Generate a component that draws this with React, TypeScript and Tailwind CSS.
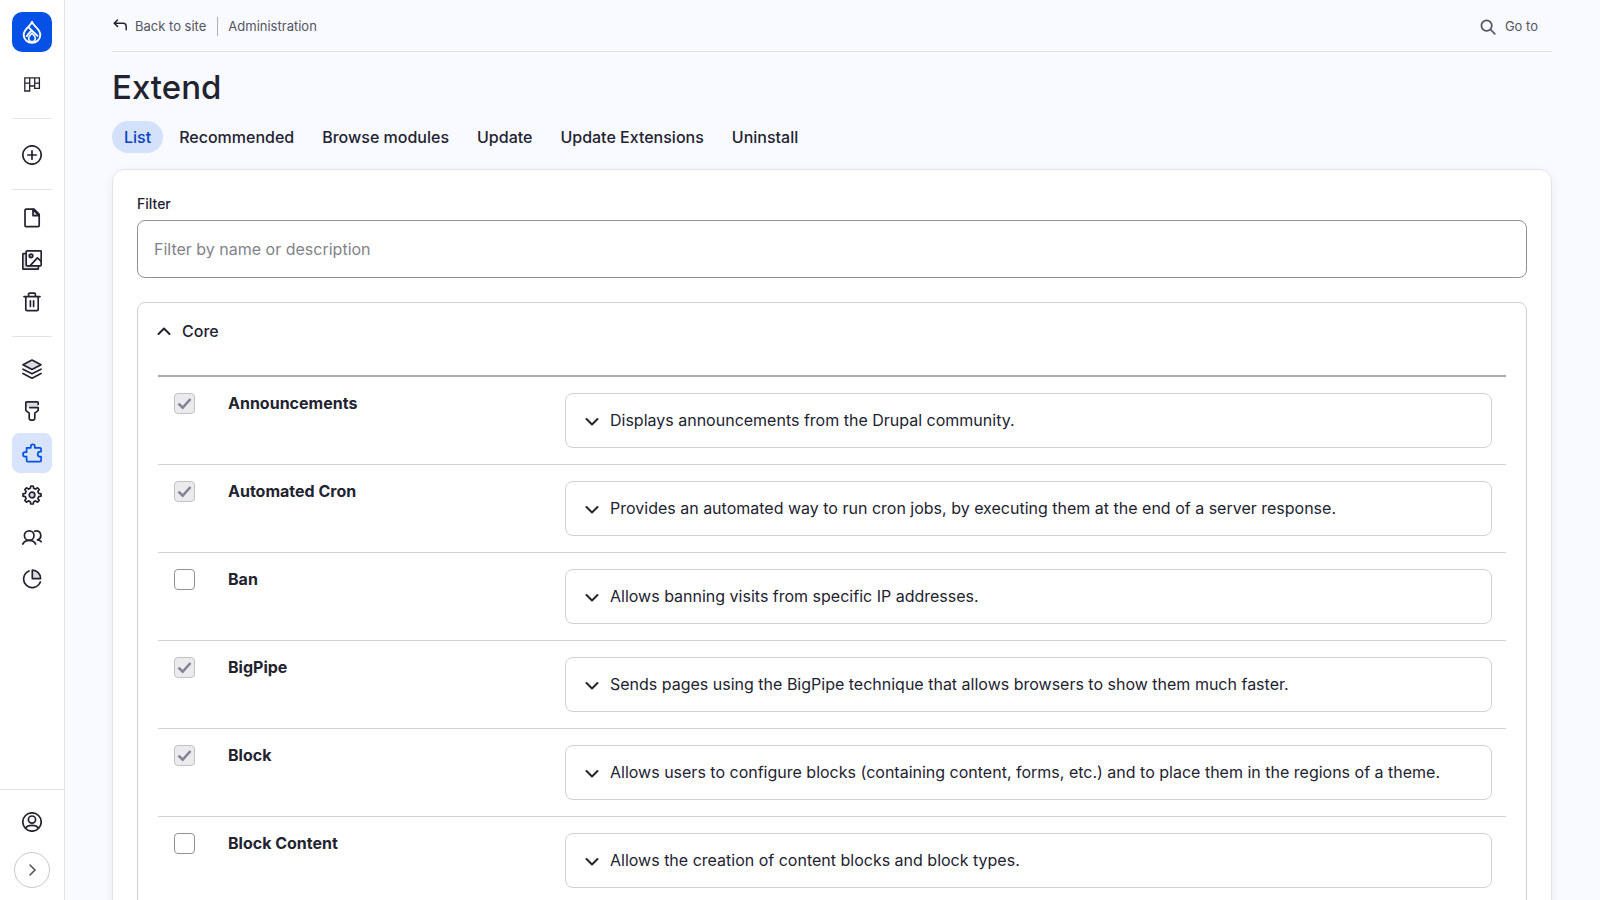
import React from 'react';

type IconProps = { children: React.ReactNode };

const Icon = ({ children }: IconProps) => (
  <svg
    className="size-5"
    viewBox="0 0 20 20"
    fill="none"
    stroke="currentColor"
    strokeWidth="1.7"
    strokeLinecap="round"
    strokeLinejoin="round"
    aria-hidden="true"
  >
    {children}
  </svg>
);

const BlocksIcon = () => (
  <svg className="size-5" viewBox="0 0 20 20" fill="none" stroke="currentColor" strokeWidth="1.3" aria-hidden="true">
    <path d="M2.8 3.8h14.6v10.6h-4.7V12H7.700v5H2.8zM7.7 3.8V12M12.7 3.8V12M2.8 9.2h4.9M12.7 9.2h4.700" />
  </svg>
);

const PlusIcon = () => (
  <Icon>
    <circle cx="10" cy="10" r="9.2" />
    <path d="M10 5.8v8.4M5.8 10h8.4" />
  </Icon>
);

const FileIcon = () => (
  <Icon>
    <path d="M4 1.2h8l5.2 5.2v11.2a1 1 0 0 1-1 1H4a1 1 0 0 1-1-1V2.2a1 1 0 0 1 1-1z" />
    <path d="M11 1.4v6.200h6z" fill="#dcdde1" />
  </Icon>
);

const MediaIcon = () => (
  <Icon>
    <path d="M4 3.6H1.6a.8.8 0 0 0-.8.8v14c0 .4.4.8.8.8h14c.4 0 .8-.4.8-.8V16" fill="#dcdde1" />
    <rect x="4.2" y=".9" width="15" height="15" rx=".8" fill="white" />
    <circle cx="9" cy="5.8" r="1.8" fill="#9d9ea6" />
    <path d="m8.2 15.6 7.2-7.8 3.8 3.6" />
  </Icon>
);

const TrashIcon = () => (
  <Icon>
    <path d="M2 4.6h16M3.8 4.8v12.6c0 .7.5 1.2 1.2 1.2h10c.7 0 1.2-.5 1.2-1.2V4.8M6.6 4.4V2.2c0-.6.4-1 1-1h4.8c.6 0 1 .4 1 1v2.2M8.4 8.8v5.6M11.6 8.8v5.6" />
  </Icon>
);

const LayersIcon = () => (
  <Icon>
    <path d="M10 1 1 5.8l9 4.8 9-4.8z" fill="#dcdde1" />
    <path d="m1 10.2 9 4.6 9-4.6M1 14.4l9 4.8 9-4.8" />
  </Icon>
);

const BrushIcon = () => (
  <Icon>
    <path d="M4 1h12v5.4H4z" fill="#dcdde1" stroke="none" />
    <path d="M16.2 3.4V1.700a.8.8 0 0 0-.8-.8H4.600a.8.8 0 0 0-.8.8v7.200c0 .400.200.800.500 1l2.900 2.200v5.200c0 1 .8 1.900 1.900 1.900h1.800c1 0 1.900-.9 1.900-1.900v-5.200l2.900-2.200c.3-.2.500-.6.500-1V6.600H7.800" />
  </Icon>
);

const PuzzleIcon = () => (
  <Icon>
    <path d="M4.6 4.8h4.2V3.4a2 2 0 0 1 4 0v1.4h5.1c.7 0 1.2.5 1.2 1.2v2.7h-.9a2.5 2.5 0 0 0 0 5h.9v3.8c0 .7-.5 1.2-1.2 1.2H5.8c-.7 0-1.2-.5-1.2-1.2v-3.9H3.2a2.2 2.2 0 0 1 0-4.4h1.4z" />
  </Icon>
);

const GearIcon = () => (
  <Icon>
    <path d="M8.3 3.3 8.8 1h2.4l.5 2.3 1.8.8 2-1.3 1.7 1.7-1.3 2 .8 1.8 2.3.5v2.4l-2.3.5-.8 1.8 1.3 2-1.7 1.7-2-1.3-1.8.8-.5 2.3H8.8l-.5-2.3-1.8-.8-2 1.3-1.7-1.7 1.3-2-.8-1.8L1 11.2V8.8l2.3-.5.8-1.8-1.3-2 1.7-1.7 2 1.3z" />
    <circle cx="10" cy="10" r="2.8" fill="#dcdde1" />
  </Icon>
);

const PeopleIcon = () => (
  <Icon>
    <circle cx="7.2" cy="8.6" r="4.8" />
    <path d="M.8 17c1.2-2.3 3.6-3.7 6.4-3.7s5.2 1.4 6.4 3.7M12.6 4.2c.5-.2 1-.3 1.5-.3a4.6 4.6 0 0 1 1.4 9c1.500.2 2.8.8 3.700 1.700" />
  </Icon>
);

const PieIcon = () => (
  <Icon>
    <path d="M7 2a8.6 8.6 0 1 0 11.3 11" />
    <path d="M10.3 1.2v8.4h8.3a8.4 8.4 0 0 0-8.3-8.4z" fill="#dcdde1" />
  </Icon>
);

const UserIcon = () => (
  <Icon>
    <circle cx="10" cy="10" r="9.2" />
    <circle cx="10" cy="7.6" r="3.6" />
    <path d="M3.8 16c1-2 3.4-2.6 6.2-2.6s5.2.6 6.2 2.6" />
  </Icon>
);

const DrupalLogo = () => (
  <svg className="h-6 w-5" viewBox="0 0 20 24" fill="none" stroke="white" strokeWidth="1.9" aria-hidden="true">
    <path
      d="M10 1.800C9.400 4 7.800 5.400 6 7.200 3.800 9.400 1.700 11.500 1.700 15a8.300 7.800 0 0 0 16.600 0c0-3.500-2.100-5.600-4.300-7.800C12.200 5.400 10.600 4 10 1.800z"
      strokeLinejoin="round"
    />
    <path d="m6.600 7.400 9.400 9M9.600 10.400c-1.600 1.800-4 3.800-5.200 6.400" />
    <path d="M10 13.200c-1.500 1.700-3.300 2.700-3.300 5a3.300 3.300 0 0 0 6.600 0c0-2.300-1.800-3.300-3.300-5z" strokeWidth="1.500" />
  </svg>
);

const Chevron = ({ up = false }: { up?: boolean }) => (
  <svg
    className="size-4 shrink-0"
    viewBox="0 0 16 16"
    fill="none"
    stroke="currentColor"
    strokeWidth="2"
    strokeLinecap="round"
    strokeLinejoin="round"
    aria-hidden="true"
  >
    <path d={up ? 'm2.500 11 5.500-5.500 5.500 5.500' : 'm2.500 6 5.500 5.500L13.500 6'} />
  </svg>
);

type NavItem = { label: string; icon: React.ReactNode; active?: boolean };

const NavLink = ({ label, icon, active }: NavItem) => (
  <a
    href="#"
    aria-label={label}
    className={
      active
        ? 'flex size-10 items-center justify-center rounded-lg bg-[#d8e4fc] text-[#0550e6]'
        : 'flex size-10 items-center justify-center rounded-lg'
    }
  >
    {icon}
  </a>
);

const contentNav: NavItem[] = [
  { label: 'Content', icon: <FileIcon /> },
  { label: 'Media', icon: <MediaIcon /> },
  { label: 'Trash', icon: <TrashIcon /> },
];

const adminNav: NavItem[] = [
  { label: 'Structure', icon: <LayersIcon /> },
  { label: 'Appearance', icon: <BrushIcon /> },
  { label: 'Extend', icon: <PuzzleIcon />, active: true },
  { label: 'Configuration', icon: <GearIcon /> },
  { label: 'People', icon: <PeopleIcon /> },
  { label: 'Reports', icon: <PieIcon /> },
];

const tabs = ['List', 'Recommended', 'Browse modules', 'Update', 'Update Extensions', 'Uninstall'];

const modules = [
  { id: 'announcements', name: 'Announcements', enabled: true, description: 'Displays announcements from the Drupal community.' },
  { id: 'automated-cron', name: 'Automated Cron', enabled: true, description: 'Provides an automated way to run cron jobs, by executing them at the end of a server response.' },
  { id: 'ban', name: 'Ban', enabled: false, description: 'Allows banning visits from specific IP addresses.' },
  { id: 'big-pipe', name: 'BigPipe', enabled: true, description: 'Sends pages using the BigPipe technique that allows browsers to show them much faster.' },
  { id: 'block', name: 'Block', enabled: true, description: 'Allows users to configure blocks (containing content, forms, etc.) and to place them in the regions of a theme.' },
  { id: 'block-content', name: 'Block Content', enabled: false, description: 'Allows the creation of content blocks and block types.' },
];

const Sidebar = () => (
  <aside className="flex w-[65px] shrink-0 flex-col border-r border-[#e3e4e8] bg-white">
    <nav aria-label="Administration" className="flex flex-1 flex-col px-3 pt-3">
      <a href="#" aria-label="Home" className="flex size-10 items-center justify-center rounded-[10px] bg-[#0550e6]">
        <DrupalLogo />
      </a>
      <div className="border-b border-[#e3e4e8] pt-3 pb-3.5">
        <NavLink label="Dashboard" icon={<BlocksIcon />} />
      </div>
      <div className="border-b border-[#e3e4e8] pt-4 pb-3.5">
        <NavLink label="Create" icon={<PlusIcon />} />
      </div>
      <div className="flex flex-col gap-0.5 border-b border-[#e3e4e8] pt-2 pb-3.5">
        {contentNav.map((item) => (
          <NavLink key={item.label} {...item} />
        ))}
      </div>
      <div className="flex flex-col gap-0.5 pt-3">
        {adminNav.map((item) => (
          <NavLink key={item.label} {...item} />
        ))}
      </div>
    </nav>
    <div className="flex flex-col items-center gap-2.5 border-t border-[#e3e4e8] px-3 pt-3 pb-3">
      <NavLink label="Account" icon={<UserIcon />} />
      <button
        type="button"
        aria-label="Expand sidebar"
        className="flex size-9 items-center justify-center rounded-full border border-[#c8c9ce] text-[#545560]"
      >
        <svg className="size-4" viewBox="0 0 16 16" fill="none" stroke="currentColor" strokeWidth="1.6" strokeLinecap="round" aria-hidden="true">
          <path d="m6 3 5 5-5 5" />
        </svg>
      </button>
    </div>
  </aside>
);

const TopBar = () => (
  <div className="flex h-[52px] items-center justify-between border-b border-[#e3e4e8] pt-0.5 text-[13px] text-[#545560]">
    <div className="flex items-center">
      <a href="#" className="flex items-center gap-[7px]">
        <svg className="size-4 text-[#222330]" viewBox="0 0 16 16" fill="none" stroke="currentColor" strokeWidth="1.5" strokeLinecap="round" strokeLinejoin="round" aria-hidden="true">
          <path d="M5.500 1 2.200 4.200l3.300 3.200M2.200 4.200H11a3.200 3.200 0 0 1 3.200 3.200v3.400" />
        </svg>
        Back to site
      </a>
      <a href="#" className="ml-[11px] border-l border-[#adaeb3] pl-2.5">
        Administration
      </a>
    </div>
    <button type="button" className="flex items-center gap-[9px] pr-3.5">
      <svg className="size-4" viewBox="0 0 16 16" fill="none" stroke="currentColor" strokeWidth="1.7" strokeLinecap="round" aria-hidden="true">
        <circle cx="6.6" cy="6.6" r="5.2" />
        <path d="m10.500 10.500 4.300 4.300" />
      </svg>
      Go to
    </button>
  </div>
);

const ModuleRow = ({ id, name, enabled, description }: (typeof modules)[number]) => (
  <tr className="h-[88px] border-b border-[#d0d1d5] align-top">
    <td className="w-[54px] pt-4 pl-4">
      <span className="relative block size-[21px]">
        <input
          id={id}
          type="checkbox"
          defaultChecked={enabled}
          disabled={enabled}
          className="block size-[21px] appearance-none rounded-[4px] border border-[#8e929c] bg-white disabled:border-[#c0c1c5] disabled:bg-[#ebebed]"
        />
        {enabled && (
          <svg className="pointer-events-none absolute inset-0 size-[21px]" viewBox="0 0 21 21" fill="none" stroke="#828393" strokeWidth="2.5" aria-hidden="true">
            <path d="m4.500 10.600 4.200 4L16.500 6" />
          </svg>
        )}
      </span>
    </td>
    <td className="w-[337px] pt-3.5 pl-4">
      <label htmlFor={id} className="font-bold">
        {name}
      </label>
    </td>
    <td className="py-4 pr-3.5 pl-4">
      <details className="rounded-lg border border-[#d0d1d5]">
        <summary className="flex h-[53px] cursor-pointer list-none items-center gap-2.5 px-[18px]">
          <Chevron />
          <span className="pb-0.5">{description}</span>
        </summary>
      </details>
    </td>
  </tr>
);

const App = () => {
  return (
    <div className="flex h-screen overflow-hidden bg-[#f9faff] font-['Inter',sans-serif] text-base text-[#222330]">
      <Sidebar />
      <main className="min-w-0 flex-1 overflow-hidden pr-12 pl-[47px]">
        <TopBar />
        <h1 className="mt-3.5 text-[33px] leading-[42px] font-medium">Extend</h1>
        <nav aria-label="Tabs" className="mt-[13px] flex gap-1 font-medium">
          {tabs.map((tab, index) => (
            <a
              key={tab}
              href="#"
              className={index === 0 ? 'rounded-full bg-[#d4e1fb] px-3 py-1 text-[#0444c4]' : 'px-3 py-1'}
            >
              {tab}
            </a>
          ))}
        </nav>
        <form className="mt-4 rounded-xl border border-[#e3e4e8] bg-white p-6 shadow-[0_4px_12px_rgba(0,40,120,0.06)]">
          <label htmlFor="filter" className="block text-sm leading-5 font-medium">
            Filter
          </label>
          <input
            id="filter"
            type="text"
            placeholder="Filter by name or description"
            className="mt-1.5 block h-[58px] w-full rounded-lg border border-[#8e929c] bg-white px-4 placeholder:text-[#828388]"
          />
          <details open className="mt-6 rounded-lg border border-[#d0d1d5] px-5 pb-5">
            <summary className="-mx-0.5 flex h-14 cursor-pointer list-none items-center gap-2.5 font-medium">
              <Chevron up />
              Core
            </summary>
            <table className="mt-4 w-full table-fixed border-collapse border-t-2 border-[#a9aaad]">
              <tbody>
                {modules.map((module) => (
                  <ModuleRow key={module.id} {...module} />
                ))}
              </tbody>
            </table>
          </details>
        </form>
      </main>
    </div>
  );
};

export default App;
